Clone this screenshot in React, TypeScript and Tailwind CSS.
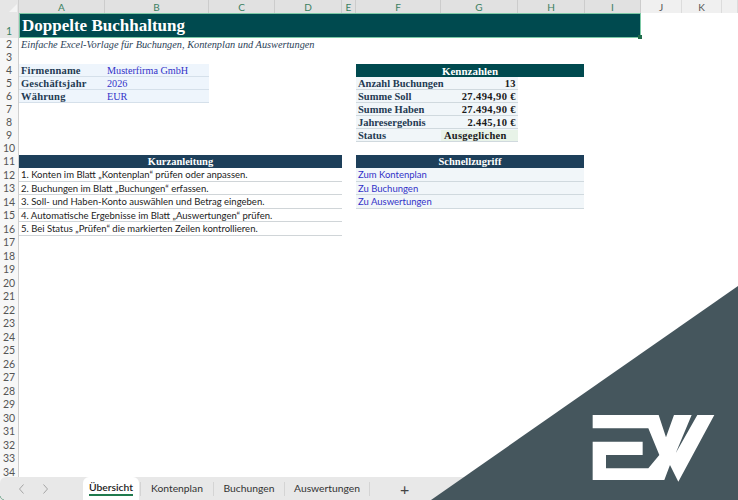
const colHeads: { label: string; width: number; active: boolean }[] = [
  { label: "A", width: 86, active: true },
  { label: "B", width: 104, active: true },
  { label: "C", width: 66, active: true },
  { label: "D", width: 67, active: true },
  { label: "E", width: 14, active: true },
  { label: "F", width: 85, active: true },
  { label: "G", width: 77, active: true },
  { label: "H", width: 67, active: true },
  { label: "I", width: 56, active: true },
  { label: "J", width: 41, active: false },
  { label: "K", width: 40, active: false },
  { label: "", width: 16, active: false },
];

const rowNums = Array.from({ length: 33 }, (_, i) => i + 2);

const company = [
  ["Firmenname", "Musterfirma GmbH"],
  ["Geschäftsjahr", "2026"],
  ["Währung", "EUR"],
];

const numbers = [
  ["Anzahl Buchungen", "13"],
  ["Summe Soll", "27.494,90 €"],
  ["Summe Haben", "27.494,90 €"],
  ["Jahresergebnis", "2.445,10 €"],
];

const steps = [
  "1. Konten im Blatt „Kontenplan“ prüfen oder anpassen.",
  "2. Buchungen im Blatt „Buchungen“ erfassen.",
  "3. Soll- und Haben-Konto auswählen und Betrag eingeben.",
  "4. Automatische Ergebnisse im Blatt „Auswertungen“ prüfen.",
  "5. Bei Status „Prüfen“ die markierten Zeilen kontrollieren.",
];

const links = ["Zum Kontenplan", "Zu Buchungen", "Zu Auswertungen"];

const tabs = [
  { label: "Kontenplan", width: 73 },
  { label: "Buchungen", width: 71 },
  { label: "Auswertungen", width: 85 },
];

const serif = "font-['Liberation_Serif',serif]";
const sans = "font-['Lato',sans-serif]";

export default function App() {
  return (
    <div className="relative w-[738px] h-[500px] overflow-hidden bg-white flex flex-col">
      {/* column headers */}
      <div className="flex h-[13px] shrink-0">
        <div className="w-[19px] shrink-0 bg-[#e6e6e6] border-r border-[#cfcfcf] flex items-end justify-end pr-[1px] pb-[1px]">
          <svg width="8" height="8" viewBox="0 0 8 8">
            <path d="M8 0V8H0Z" fill="#f4f4f4" />
          </svg>
        </div>
        {colHeads.map((c, i) => (
          <div
            key={i}
            style={{ width: c.width }}
            className={`shrink-0 flex items-center justify-center text-[10px] leading-none border-r ${sans} ${
              c.active
                ? "bg-[#e1e1e1] text-[#3a8060] border-[#cccccc]"
                : "bg-[#f0f0f0] text-[#555] border-[#dcdcdc]"
            }`}
          >
            {c.label}
          </div>
        ))}
      </div>

      <div className="flex flex-1 min-h-0">
        {/* row numbers */}
        <div className="w-[19px] shrink-0 bg-[#f7f7f7] border-r border-[#cfcfcf] flex flex-col">
          <div className="h-[25px] shrink-0 bg-[#e6e6e6] flex items-end justify-center text-[10.5px] leading-[13px] text-[#3a8060]">
            <span className={sans}>1</span>
          </div>
          {rowNums.map((n) => (
            <div
              key={n}
              className={`shrink-0 flex items-center justify-center text-[10.5px] leading-none text-[#555] ${sans} ${
                n <= 11 ? "h-[13px]" : "h-[13.5px]"
              }`}
            >
              {n}
            </div>
          ))}
        </div>

        {/* sheet */}
        <div className="flex-1 min-w-0 flex flex-col">
          {/* title */}
          <div className="relative w-[622px] h-[25px] shrink-0 bg-[#004a4f] border border-[#7cc9a6] flex items-center pl-[2px]">
            <span className={`text-[17px] font-bold text-white ${serif}`}>
              Doppelte Buchhaltung
            </span>
            <div className="absolute right-[-2px] bottom-[-2px] w-[4px] h-[4px] bg-[#1f6b4a]" />
          </div>
          <div className={`h-[13px] shrink-0 pl-[2px] flex items-center text-[10.3px] italic text-[#2c4257] ${serif}`}>
            Einfache Excel-Vorlage für Buchungen, Kontenplan und Auswertungen
          </div>

          <div className="flex mt-[13px] gap-[14px]">
            <div className="w-[323px] shrink-0 flex flex-col">
              {/* company data */}
              <div className="flex flex-col w-[190px] h-[91px]">
                {company.map(([k, v]) => (
                  <div key={k} className={`h-[13px] pt-[1px] flex items-center bg-[#eef5fc] border-b border-[#d5e0ea] text-[10.5px] ${serif}`}>
                    <span className="w-[86px] pl-[2px] font-bold tracking-[0.2px] text-[#243b53]">{k}</span>
                    <span className="pl-[2px] text-[10.2px] text-[#3232c8]">{v}</span>
                  </div>
                ))}
              </div>
              {/* instructions */}
              <div className={`h-[13px] bg-[#1d3f5a] flex items-center justify-center text-[10.5px] font-bold text-white ${serif}`}>
                Kurzanleitung
              </div>
              {steps.map((s) => (
                <div key={s} className={`h-[13.5px] pl-[2px] pt-[2px] flex items-center border-b border-[#d0d5d8] text-[9.5px] text-[#222] ${sans}`}>
                  {s}
                </div>
              ))}
            </div>

            <div className="w-[228px] shrink-0 flex flex-col">
              {/* key figures */}
              <div className="h-[91px] flex flex-col">
                <div className={`h-[13px] pt-[1px] bg-[#004a4f] flex items-center justify-center text-[11px] font-bold text-white ${serif}`}>
                  Kennzahlen
                </div>
                <div className={`w-[162px] flex flex-col text-[10.5px] font-bold ${serif}`}>
                  {numbers.map(([k, v]) => (
                    <div key={k} className="h-[13px] pt-[1px] flex items-center justify-between px-[2px] bg-[#f1f6f9] border-b border-[#d0d9de]">
                      <span className="text-[#243b53]">{k}</span>
                      <span className="tracking-[0.4px] text-[#1a1a1a]">{v}</span>
                    </div>
                  ))}
                  <div className="h-[13px] pt-[1px] flex items-center bg-[#f1f6f9] border-b border-[#d0d9de]">
                    <span className="w-[85px] pl-[2px] text-[#243b53]">Status</span>
                    <span className="flex-1 h-full flex items-center pl-[3px] tracking-[0.25px] bg-[#e8f3e8] text-[#1a1a1a]">
                      Ausgeglichen
                    </span>
                  </div>
                </div>
              </div>
              {/* quick access */}
              <div className={`h-[13px] bg-[#1d3f5a] flex items-center justify-center text-[10.5px] font-bold text-white ${serif}`}>
                Schnellzugriff
              </div>
              {links.map((l) => (
                <div key={l} className={`h-[13.5px] pl-[2px] pt-[2px] flex items-center bg-[#f1f6f9] border-b border-[#d0d9de] text-[9.5px] text-[#3232c8] ${sans}`}>
                  {l}
                </div>
              ))}
            </div>
          </div>
        </div>
      </div>

      {/* sheet tabs */}
      <div className={`absolute left-0 bottom-0 w-full h-[23px] bg-[#e8e8e8] rounded-tl-[6px] flex items-center text-[10.3px] text-[#333] ${sans}`}>
        <div className="w-[83px] shrink-0 flex items-center pl-[19px] gap-[19px] text-[#a5a5a5]">
          <svg width="5" height="10" viewBox="0 0 5 10" fill="none" stroke="currentColor" strokeWidth="1"><path d="M4.5 .5 .5 5l4 4.5" /></svg>
          <svg width="5" height="10" viewBox="0 0 5 10" fill="none" stroke="currentColor" strokeWidth="1"><path d="M.5 .5l4 4.5-4 4.5" /></svg>
        </div>
        <div className="w-[56px] h-full shrink-0 bg-white rounded-t-[6px] flex flex-col items-center pt-[3px] font-semibold text-[#222]">
          <span className="border-b-2 border-[#1f7a4d] leading-[14px]">Übersicht</span>
        </div>
        <div className="w-[2px] h-[14px] shrink-0 border-r border-[#d4d4d4]" />
        {tabs.map((t) => (
          <div
            key={t.label}
            style={{ width: t.width }}
            className="h-[14px] shrink-0 flex items-center justify-center border-r border-[#d4d4d4]"
          >
            {t.label}
          </div>
        ))}
        <div className="ml-[30px] text-[16px] leading-none text-[#444]">+</div>
      </div>

      {/* window corner */}
      <svg className="absolute left-0 bottom-0" width="4" height="4" viewBox="0 0 4 4" fill="none">
        <path d="M0 0C.5 2 2 3.5 4 4" stroke="#6fa58a" strokeWidth="1" />
      </svg>

      {/* watermark corner */}
      <svg className="absolute right-0 bottom-0" width="307" height="214" viewBox="0 0 307 214">
        <path d="M307 0V214H0Z" fill="#45565d" />
        <path
          transform="translate(149 114) scale(0.3333)"
          d="M38 45H236L258 112 282 45H335L287 160 352 45H403L295 245 270 195 253 240H38V125H188V165H78V205H205L238 165 205 85H38Z"
          fill="#ffffff"
        />
      </svg>
    </div>
  );
}
